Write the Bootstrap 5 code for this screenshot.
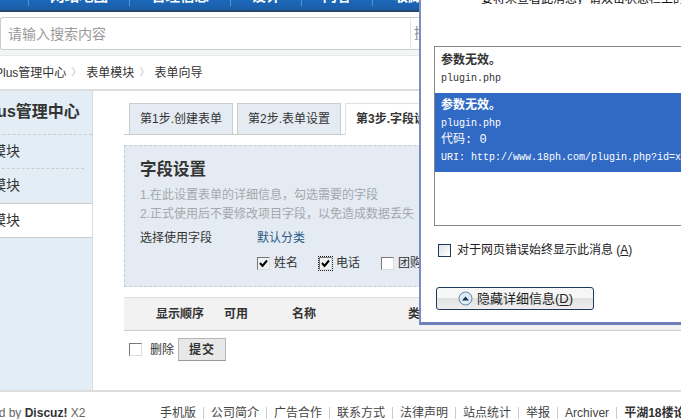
<!DOCTYPE html>
<html lang="zh">
<head>
  <meta charset="UTF-8" />
  <meta name="viewport" content="width=device-width, initial-scale=1.0" />
  <title>表单向导</title>
  <link href="https://cdn.jsdelivr.net/npm/bootstrap@5.3.0/dist/css/bootstrap.min.css" rel="stylesheet" />
  <style>
    html, body { height: 100%; }
    body {
      margin: 0;
      overflow: hidden;
      background: #fff;
      color: #333;
      font: 12px/18px "Liberation Sans", "Noto Sans CJK SC", sans-serif;
    }
    .page-shell { width: 681px; height: 419px; overflow: hidden; position: relative; }

    /* top nav, only the bottom of it is in view */
    .topnav {
      height: 12px;
      flex: none;
      overflow: hidden;
      background: linear-gradient(#1b68bb, #1c5ca6);
      border-bottom: 2px solid #27476d;
    }
    .topnav-item {
      flex: none;
      color: #fff;
      font-weight: 700;
      font-size: 14.5px;
      text-align: center;
      white-space: nowrap;
    }
    .topnav-item span { display: block; margin-top: -14px; line-height: 20px; }
    .topnav-w28 { width: 28px; }
    .topnav-w100 { width: 100px; }
    .topnav-w70 { width: 70px; }
    .topnav-sep { width: 1px; height: 6px; flex: none; background: #5b92cf; }

    .searchbar { height: 38px; padding: 5px 0 0 0; background: #fff; }
    .search-box {
      height: 33px;
      width: 419px;
      overflow: hidden;
      border: 1px solid #ccc;
      border-right: 0;
      border-radius: 3px 0 0 3px;
      background: #fff;
    }
    .search-input {
      width: 410px;
      flex: none;
      border: 0;
      border-right: 1px solid #e4e4e4;
      padding: 0 0 0 7px;
      font-size: 14px;
      color: #555;
      outline: 0;
      background: transparent;
    }
    .search-input::placeholder { color: #9a9a9a; opacity: 1; }
    .search-btn { padding-left: 3px; color: #888; font-size: 14px; line-height: 31px; white-space: nowrap; }
    .search-strip { height: 6px; background: #f3f5f6; border-bottom: 1px solid #e6e9ea; }

    .crumbs {
      height: 35px;
      margin-left: -5px;
      border-bottom: 2px solid #ddd;
      align-items: center;
      color: #333;
    }
    .crumb-arrow { color: #bbb; font-size: 10px; width: 20px; text-align: center; }

    .body-row { height: 301px; border-bottom: 2px solid #ddd; }
    .side-col {
      width: 93px;
      flex: none;
      background: #e3edf5;
      border-right: 1px solid #d3dde5;
      overflow: hidden;
      font-size: 14px;
    }
    .side-title {
      height: 44px;
      border-bottom: 1px dashed #ccc;
      font-size: 16px;
      font-weight: 700;
      line-height: 42px;
      margin-left: -18px;
      white-space: nowrap;
      color: #333;
    }
    .side-link { height: 34px; line-height: 32px; margin-left: -8px; color: #333; white-space: nowrap; }
    .side-link.dashed { border-bottom: 1px dashed #ccc; margin-right: 8px; }
    .side-link.on {
      height: 35px;
      margin-left: 0;
      margin-right: -1px;
      background: #fff;
      border-top: 1px solid #ccc;
      border-bottom: 1px solid #ccc;
      text-indent: -8px;
    }

    .main-col { padding: 12px 0 0 31px; flex: 1; min-width: 0; }
    .step-tabs {
      padding-left: 5px;
      border-bottom: 1px solid #ccc;
      flex-wrap: nowrap;
      gap: 4px;
      width: 557px;
    }
    .step-tabs .nav-link {
      width: 104px;
      height: 32px;
      padding: 0;
      margin-bottom: -1px;
      background: #e4ebf2;
      border: 1px solid #ccc;
      border-radius: 0;
      color: #333;
      font-size: 12px;
      line-height: 30px;
      text-align: center;
      white-space: nowrap;
    }
    .step-tabs .nav-link.active { background: #fff; border-bottom-color: #fff; font-weight: 700; color: #333; }

    .field-panel {
      width: 557px;
      height: 142px;
      margin-top: 10px;
      padding: 11px 15px 0;
      background: #e4ebf2;
      border: 1px dashed #c6ccd2;
    }
    .field-title { font-size: 16.5px; font-weight: 700; line-height: 24px; color: #333; margin: 0 0 5px; }
    .field-hint { color: #a3a8ad; line-height: 19px; white-space: nowrap; }
    .field-row { margin-top: 5px; height: 19px; }
    .field-label { width: 117px; flex: none; }
    .field-cat { color: #2b5a87; text-decoration: none; }
    .field-checks { margin: 6px 0 0 117px; gap: 21px; white-space: nowrap; }
    .field-check { gap: 4px; width: 41px; flex: none; align-items: center; }

    .old-check {
      appearance: none;
      -webkit-appearance: none;
      width: 13px;
      height: 13px;
      margin: 0;
      flex: none;
      background-color: #fff;
      border: 1px solid;
      border-color: #777 #ddd #ddd #777;
      background-repeat: no-repeat;
      background-position: center;
    }
    .old-check:checked {
      background-color: #f1f1f1;
      background-image: url("data:image/svg+xml,%3Csvg xmlns='http://www.w3.org/2000/svg' width='9' height='9'%3E%3Cpath d='M1 4l2.5 3L8 1.5' fill='none' stroke='%23000' stroke-width='2'/%3E%3C/svg%3E");
    }
    .old-check.dotted { outline: 1px dotted #222; outline-offset: 0; }

    .grid-head {
      width: 557px;
      height: 34px;
      margin-top: 10px;
      background: #f2f2f2;
      border-top: 1px solid #ddd;
      border-bottom: 1px solid #ccc;
      font-weight: 700;
      line-height: 33px;
      padding-left: 32px;
    }
    .grid-order, .grid-use { width: 68px; flex: none; }
    .grid-name { width: 116px; flex: none; }
    .grid-foot { margin-top: 7px; padding-left: 5px; height: 23px; }
    .grid-del { margin-left: 8px; width: 28px; }
    .submit-btn {
      width: 48px;
      height: 23px;
      padding: 0;
      border: 1px solid #b5b5b5;
      border-bottom-color: #999;
      border-radius: 0;
      background: #e8e8e8;
      color: #333;
      font-weight: 700;
      font-size: 12px;
      line-height: 20px;
      letter-spacing: 1px;
    }

    .foot-row { height: 27px; padding-top: 12px; white-space: nowrap; color: #555; }
    .foot-left { width: 202px; flex: none; margin-left: -42px; color: #666; }
    .foot-left strong { color: #333; }
    .foot-links span { padding: 0 7px; border-right: 1px solid #ccc; line-height: 13px; margin-top: 3px; height: 13px; color: #444; }
    .foot-links span:first-child { padding-left: 0; }
    .foot-links strong { padding-left: 7px; color: #333; }

    /* the script error dialog lies over the page */
    .err-dialog {
      position: absolute;
      left: 419px;
      top: -4px;
      width: 300px;
      height: 329px;
      overflow: hidden;
      background: #fff;
      border-left: 2px solid #7a8cc4;
      border-bottom: 3px solid #6f7fbb;
    }
    .err-top { margin: -3px 0 0 60px; height: 14px; line-height: 12px; font-size: 12px; color: #111; white-space: nowrap; }
    .err-list {
      margin: 39px 0 0 13px;
      width: 300px;
      height: 180px;
      border: 1px solid #888;
      font-size: 12px;
      line-height: 17px;
    }
    .err-item { padding: 3px 6px 0; height: 46px; background: #fff; }
    .err-item.sel { height: 79px; padding-top: 2px; background: #316ac5; color: #fff; }
    .err-item b { display: block; line-height: 20px; }
    .err-item span { display: block; font-family: "Liberation Mono", "Noto Sans CJK SC", monospace; font-size: 10px; white-space: nowrap; }
    .err-item span.err-code { font-size: 12px; }
    .err-always { margin: 17px 0 0 17px; gap: 6px; height: 14px; line-height: 14px; white-space: nowrap; color: #222; }
    .err-always .old-check { border: 1px solid #1e395b; background: linear-gradient(135deg, #dfe3e6, #fff); }
    .err-hide {
      display: flex;
      align-items: center;
      width: 158px;
      height: 23px;
      margin: 30px 0 0 15px;
      padding: 0 0 0 21px;
      gap: 4px;
      border: 1px solid #1e395b;
      border-radius: 3px;
      background: linear-gradient(#f6f6f6 50%, #e2e2e2 50%, #eee);
      color: #222;
      font-size: 13px;
      line-height: 20px;
      white-space: nowrap;
    }
    .err-hide u { text-underline-offset: 2px; }
  </style>
</head>
<body>
  <div class="page-shell d-flex flex-column">

    <div class="topnav d-flex">
      <div class="topnav-item topnav-w28"></div>
      <div class="topnav-sep"></div>
      <div class="topnav-item topnav-w100"><span>网站地图</span></div>
      <div class="topnav-sep"></div>
      <div class="topnav-item topnav-w100"><span>管理信息</span></div>
      <div class="topnav-sep"></div>
      <div class="topnav-item topnav-w70"><span>设计</span></div>
      <div class="topnav-sep"></div>
      <div class="topnav-item topnav-w70"><span>内容</span></div>
      <div class="topnav-sep"></div>
      <div class="topnav-item topnav-w70"><span>收藏</span></div>
    </div>

    <div class="searchbar">
      <div class="search-box d-flex">
        <input class="search-input" type="text" placeholder="请输入搜索内容" />
        <div class="search-btn">搜索</div>
      </div>
    </div>
    <div class="search-strip"></div>

    <div class="crumbs d-flex">
      <span>Plus管理中心</span>
      <span class="crumb-arrow">〉</span>
      <span>表单模块</span>
      <span class="crumb-arrow">〉</span>
      <span>表单向导</span>
    </div>

    <div class="body-row d-flex">
      <div class="side-col">
        <div class="side-title">Plus管理中心</div>
        <div class="side-link dashed">模块</div>
        <div class="side-link">模块</div>
        <div class="side-link on">模块</div>
      </div>

      <div class="main-col">
        <ul class="nav nav-tabs step-tabs">
          <li class="nav-item"><a class="nav-link" href="#">第1步.创建表单</a></li>
          <li class="nav-item"><a class="nav-link" href="#">第2步.表单设置</a></li>
          <li class="nav-item"><a class="nav-link active" href="#">第3步.字段设置</a></li>
        </ul>

        <div class="field-panel">
          <h5 class="field-title">字段设置</h5>
          <div class="field-hint">1.在此设置表单的详细信息，勾选需要的字段</div>
          <div class="field-hint">2.正式使用后不要修改项目字段，以免造成数据丢失</div>
          <div class="field-row d-flex">
            <div class="field-label">选择使用字段</div>
            <a class="field-cat" href="#">默认分类</a>
          </div>
          <div class="field-checks d-flex">
            <label class="field-check d-flex"><input class="old-check" type="checkbox" checked />姓名</label>
            <label class="field-check d-flex"><input class="old-check dotted" type="checkbox" checked />电话</label>
            <label class="field-check d-flex"><input class="old-check" type="checkbox" />团购</label>
          </div>
        </div>

        <div class="grid-head d-flex">
          <span class="grid-order">显示顺序</span>
          <span class="grid-use">可用</span>
          <span class="grid-name">名称</span>
          <span>类型</span>
        </div>
        <div class="grid-foot d-flex align-items-center">
          <input class="old-check" type="checkbox" />
          <span class="grid-del">删除</span>
          <button class="btn submit-btn" type="button">提交</button>
        </div>
      </div>
    </div>

    <div class="foot-row d-flex">
      <div class="foot-left">Powered by <strong>Discuz!</strong> X2</div>
      <div class="foot-links d-flex">
        <span>手机版</span><span>公司简介</span><span>广告合作</span><span>联系方式</span><span>法律声明</span><span>站点统计</span><span>举报</span><span>Archiver</span><strong>平湖18楼论坛</strong>
      </div>
    </div>

    <div class="err-dialog">
      <div class="err-top">要将来查看此消息，请双击状态栏上的图标</div>
      <div class="err-list">
        <div class="err-item"><b>参数无效。</b><span>plugin.php</span></div>
        <div class="err-item sel">
          <b>参数无效。</b>
          <span>plugin.php</span>
          <span class="err-code">代码: 0</span>
          <span>URI: http://www.18ph.com/plugin.php?id=x</span>
        </div>
      </div>
      <label class="err-always d-flex align-items-center">
        <input class="old-check" type="checkbox" /><span>对于网页错误始终显示此消息 (<u>A</u>)</span>
      </label>
      <button class="err-hide" type="button">
        <svg width="15" height="15" viewBox="0 0 15 15">
          <circle cx="7.5" cy="7.5" r="6.5" fill="#dfeaf5" stroke="#5f86ad" />
          <path d="M4 9.5 7.5 5.5 11 9.5z" fill="#16304f" />
        </svg>
        <span>隐藏详细信息(<u>D</u>)</span>
      </button>
    </div>
  </div>
  <script src="https://cdn.jsdelivr.net/npm/bootstrap@5.3.0/dist/js/bootstrap.bundle.min.js"></script>
</body>
</html>
